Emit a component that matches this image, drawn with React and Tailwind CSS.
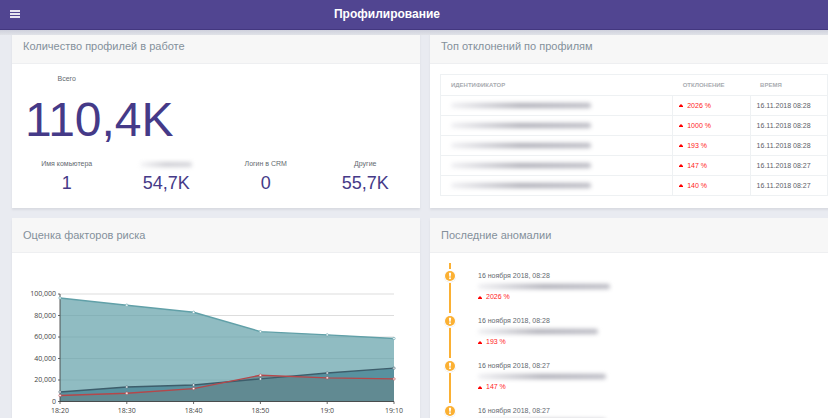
const totals = [
  { label: 'Имя комьютера', value: '1' },
  { label: null, value: '54,7K' },
  { label: 'Логин в CRM', value: '0' },
  { label: 'Другие', value: '55,7K' },
]

const deviations = [
  { percent: '2026 %', time: '16.11.2018 08:28' },
  { percent: '1000 %', time: '16.11.2018 08:28' },
  { percent: '193 %', time: '16.11.2018 08:28' },
  { percent: '147 %', time: '16.11.2018 08:27' },
  { percent: '140 %', time: '16.11.2018 08:27' },
]

const anomalies = [
  { date: '16 ноября 2018, 08:28', percent: '2026 %', mask: 'w-[132px]' },
  { date: '16 ноября 2018, 08:28', percent: '193 %', mask: 'w-[120px]' },
  { date: '16 ноября 2018, 08:27', percent: '147 %', mask: 'w-[128px]' },
  { date: '16 ноября 2018, 08:27', percent: '140 %', mask: 'w-[128px]' },
]

const hours = ['18:20', '18:30', '18:40', '18:50', '19:0', '19:10']
const ticks = [0, 20000, 40000, 60000, 80000, 100000]

const series = [
  { name: 'total', line: '#61a0a8', fill: '#61a0a8', opacity: 0.7, data: [96300, 89600, 83000, 65000, 62000, 58600] },
  { name: 'other', line: '#3d5d6b', fill: '#4f8a99', opacity: 0.85, data: [8900, 13500, 15400, 21000, 26500, 31000] },
  { name: 'logins', line: '#b5474a', fill: '#64888f', opacity: 0.8, data: [5600, 7700, 12000, 24400, 22000, 21000] },
]

const px = (i) => 48 + i * 66.8
const py = (v) => 148.5 - v * 0.001075

function Card({ title, children }) {
  return (
    <section className="bg-white shadow-[0_2px_2px_#d9dbe2]">
      <h2 className="flex h-[35px] items-center border-b border-[#eeeff1] bg-[#f7f7f7] px-[11px] text-[11px] text-[#84909b]">
        {title}
      </h2>
      {children}
    </section>
  )
}

function Percent({ children }) {
  return (
    <span className="flex items-center gap-1 text-[#ff1a1a]">
      <svg width="4" height="3" viewBox="0 0 4 3" aria-hidden="true">
        <path d="M0 3V2L2 0L4 2V3Z" fill="#ff0000" />
      </svg>
      {children}
    </span>
  )
}

/* Hidden identifier */
function Masked({ className }) {
  return (
    <span
      className={`block h-[5px] rounded-full bg-linear-to-r from-[#f0f0f3] via-[#adadb6] to-[#b9b9c2] blur-[2px] ${className}`}
    />
  )
}

function RiskChart() {
  return (
    <svg viewBox="0 0 408 170" className="block w-full" role="img" aria-label="Оценка факторов риска">
      {ticks.map((t) => (
        <line key={t} x1="48" x2="382" y1={py(t)} y2={py(t)} stroke="#d4d4d4" strokeWidth="0.8" />
      ))}
      {series.map((s) => (
        <polygon
          key={s.name}
          points={`48,148.5 ${s.data.map((v, i) => `${px(i)},${py(v)}`).join(' ')} 382,148.5`}
          fill={s.fill}
          fillOpacity={s.opacity}
        />
      ))}
      <path d="M48 41V148.5H382" fill="none" stroke="#444" strokeWidth="0.9" />
      {ticks.map((t) => (
        <g key={t}>
          <line x1="46" x2="48" y1={py(t)} y2={py(t)} stroke="#444" strokeWidth="0.8" />
          <text x="44" y={py(t) + 2} textAnchor="end" className="fill-[#444] font-['Open_Sans',sans-serif] text-[7px]">
            {t.toLocaleString('en-US')}
          </text>
        </g>
      ))}
      {hours.map((h, i) => (
        <g key={h}>
          <line x1={px(i)} x2={px(i)} y1="148.5" y2="151" stroke="#444" strokeWidth="0.8" />
          <text x={px(i)} y="160" textAnchor="middle" className="fill-[#444] font-['Open_Sans',sans-serif] text-[7px]">
            {h}
          </text>
        </g>
      ))}
      {series.map((s) => (
        <g key={s.name} stroke={s.line}>
          <polyline points={s.data.map((v, i) => `${px(i)},${py(v)}`).join(' ')} fill="none" strokeWidth="1.4" />
          {s.data.map((v, i) => (
            <circle key={i} cx={px(i)} cy={py(v)} r="1.2" fill="#fff" strokeWidth="0.6" />
          ))}
        </g>
      ))}
    </svg>
  )
}

export default function App() {
  return (
    <div className="h-screen overflow-hidden bg-[#e9ebf1] font-['Liberation_Sans',Arial,sans-serif]">
      <header className="relative z-10">
        <div className="grid h-[30px] grid-cols-[1fr_auto_1fr] items-center border-b border-[#43377f] bg-[#514591] pr-16 pb-[2px] pl-[10px]">
          <button type="button" aria-label="Меню" className="flex h-4 w-[10px] flex-col justify-center gap-px">
            <span className="h-[2px] bg-[#e6e4f0]" />
            <span className="h-[2px] bg-[#e6e4f0]" />
            <span className="h-[2px] bg-[#e6e4f0]" />
          </button>
          <h1 className="text-[12px] font-bold text-white">Профилирование</h1>
        </div>
        <div className="h-[5px] bg-linear-to-b from-[#cfd1dc] to-[#e0e2e8]" />
      </header>

      <main className="-mt-[6px] -mr-[10px] grid grid-cols-2 gap-[10px] pl-3">
        <Card title="Количество профилей в работе">
          <div className="px-[5px] pt-[10px] text-center text-[7px] leading-[10px] text-[#63696f]">
            <p className="w-1/4">Всего</p>
            <p className="pt-3 pl-2 text-left text-[48px] leading-[48px] text-[#453a88]">110,4K</p>
            <ul className="grid grid-cols-4 pt-[15px]">
              {totals.map((t) => (
                <li key={t.value}>
                  <p className="flex h-[10px] items-center justify-center">
                    {t.label ?? <Masked className="w-[52px] opacity-60" />}
                  </p>
                  <p className="pt-1 text-[18px] leading-[20px] text-[#453a88]">{t.value}</p>
                </li>
              ))}
            </ul>
          </div>
        </Card>

        <Card title="Топ отклонений по профилям">
          <div className="px-[10px] pt-[10px] pb-3">
            <table className="w-full table-fixed border-collapse border border-[#eef1f3] text-left text-[7px] leading-[8px]">
              <thead>
                <tr className="h-[21px] text-[6px] text-[#a9acb1] uppercase">
                  <th className="w-3/5 px-[10px] font-bold">Идентификатор</th>
                  <th className="w-1/5 px-[10px] font-bold">Отклонение</th>
                  <th className="w-1/5 px-[10px] font-bold">Время</th>
                </tr>
              </thead>
              <tbody>
                {deviations.map((d) => (
                  <tr key={d.percent} className="h-[20px]">
                    <td className="border border-[#eef1f3] px-[10px]">
                      <Masked className="w-[140px]" />
                    </td>
                    <td className="border border-[#eef1f3] px-[6px]">
                      <Percent>{d.percent}</Percent>
                    </td>
                    <td className="border border-[#eef1f3] px-[6px] text-[#5c6068]">{d.time}</td>
                  </tr>
                ))}
              </tbody>
            </table>
          </div>
        </Card>

        <Card title="Оценка факторов риска">
          <RiskChart />
        </Card>

        <Card title="Последние аномалии">
          <ol className="px-[14px] pt-[10px] text-[7px] leading-[10px]">
            {anomalies.map((a, i) => (
              <li key={i} className="flex h-[45px] gap-[22px]">
                <div className="flex w-3 flex-col items-center">
                  <span className={i === 0 ? 'h-[6px] w-[2px] bg-[#fbb033]' : 'h-[6px] w-[2px]'} />
                  <svg width="12" height="14" viewBox="0 0 12 14" className="shrink-0" aria-hidden="true">
                    <circle cx="6" cy="7.6" r="6" fill="#e3e3e6" />
                    <circle cx="6" cy="7" r="6" fill="#fff" />
                    <circle cx="6" cy="7" r="5" fill="#fbb033" />
                    <path d="M4.9 3.8h2.2l-.4 4h-1.4z" fill="#fff" />
                    <circle cx="6" cy="9.3" r="1" fill="#fff" />
                  </svg>
                  <span className="-mb-[5px] w-[2px] flex-1 bg-[#fbb033]" />
                </div>
                <div className="pt-2">
                  <p className="text-[#63696f]">{a.date}</p>
                  <Masked className={`my-[3px] ${a.mask}`} />
                  <Percent>{a.percent}</Percent>
                </div>
              </li>
            ))}
          </ol>
        </Card>
      </main>
    </div>
  )
}
